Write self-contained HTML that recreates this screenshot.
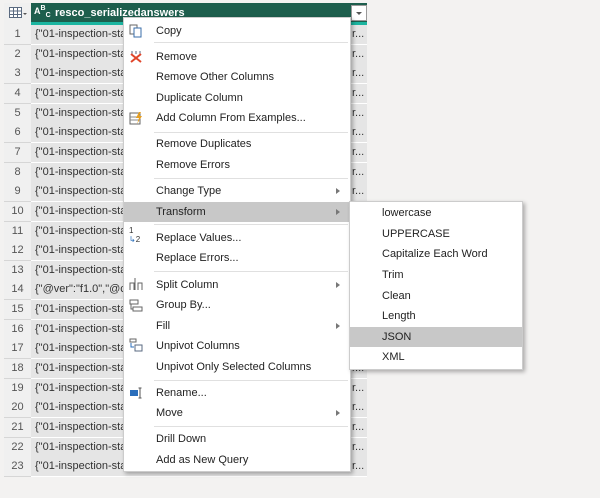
<!DOCTYPE html><html><head><style>
body{margin:0;width:600px;height:498px;background:#f3f2f1;font-family:"Liberation Sans",sans-serif;position:relative;overflow:hidden}
.a{position:absolute}
.hdr{left:31px;top:3px;width:336px;height:19px;background:#1d5e4d;color:#fff;font-weight:bold;font-size:11px}
.rn{left:4px;width:27px;height:19px;background:#f0f0f0;border-bottom:1px solid #d6d6d6;border-right:1px solid #d0d0d0;color:#555;font-size:11px;text-align:center;line-height:19px}
.dc{left:31px;width:336px;height:19px;background:#e5e5e5;border-bottom:1px solid #fff;font-size:11px;color:#333;line-height:19px;text-indent:4px;white-space:nowrap;overflow:hidden}
.menu{left:123px;top:17px;width:226px;height:453px;background:#fff;border:1px solid #ccc;box-shadow:2px 2px 4px rgba(0,0,0,.3);font-size:11px;color:#222}
.it{position:absolute;left:0;width:226px;height:20px;line-height:20px;text-indent:32px}
.sep{position:absolute;left:30px;width:194px;height:1px;background:#e0e0e0}
.hl{background:#c8c8c8}
.arr{position:absolute;right:10px;top:7px;width:0;height:0;border-left:4px solid #777;border-top:3px solid transparent;border-bottom:3px solid transparent}
.sub{left:349px;top:201px;width:172px;height:167px;background:#fff;border:1px solid #ccc;box-shadow:2px 2px 4px rgba(0,0,0,.3);font-size:11px;color:#222}
.si{position:absolute;left:0;width:172px;height:20px;line-height:20px;text-indent:32px}
</style></head><body>
<div class="a" style="left:4px;top:3px;width:27px;height:22px;background:#f0f0f0"></div>
<svg class="a" style="left:9px;top:7px" width="20" height="12"><rect x="0.5" y="0.5" width="12" height="10" fill="#fff" stroke="#5a6a80"/><path d="M0 4H13M0 7.5H13M4.5 1V11M8.5 1V11" stroke="#5a6a80"/><path d="M14 6l2 2 2-2z" fill="#555"/></svg>
<div class="a hdr"><span style="position:absolute;left:3px;top:2px;font-size:9px">A<sup style="font-size:7px">B</sup><sub style="font-size:7px">C</sub></span><span style="position:absolute;left:24px;top:4px">resco_serializedanswers</span>
<div style="position:absolute;left:320px;top:2px;width:14px;height:14px;background:#fff;border:1px solid #999"><div style="position:absolute;left:4px;top:6px;border-top:3px solid #555;border-left:3px solid transparent;border-right:3px solid transparent"></div></div></div>
<div class="a" style="left:31px;top:22px;width:336px;height:3px;background:#1bb5a0"></div>
<div id="rows"></div>
<script>
var h='';for(var i=0;i<23;i++){var t=25+i*19.65;var txt=i==13?'{"@ver":"f1.0","@c':'{"01-inspection-sta';h+='<div class="a rn" style="top:'+t+'px">'+(i+1)+'</div><div class="a dc" style="top:'+t+'px">'+txt+'<span style="position:absolute;left:317px">r...</span></div>';}
document.getElementById('rows').innerHTML=h;
</script>
<div class="a menu">
<svg style="position:absolute;left:5px;top:6px" width="14" height="14"><rect x="1" y="1" width="7" height="9" fill="#fff" stroke="#666"/><rect x="5" y="4" width="7" height="9" fill="#fff" stroke="#3a6ea8"/></svg>
<div class="it" style="top:3px">Copy</div>
<div class="sep" style="top:24px"></div>
<svg style="position:absolute;left:5px;top:31px" width="14" height="14"><path d="M3 2v3M7 2v3M11 2v3" stroke="#5a6a80"/><path d="M2 5l10 8M12 5L2 13" stroke="#e0452a" stroke-width="2"/></svg>
<div class="it" style="top:29px">Remove</div>
<div class="it" style="top:49px">Remove Other Columns</div>
<div class="it" style="top:70px">Duplicate Column</div>
<svg style="position:absolute;left:5px;top:93px" width="14" height="14"><rect x="1" y="2" width="10" height="11" fill="#fff" stroke="#666"/><path d="M1 6H11M1 9H11" stroke="#888"/><path d="M10 1l-3 6h3l-2 6 5-8h-3l2-4z" fill="#e8a020"/></svg>
<div class="it" style="top:90px">Add Column From Examples...</div>
<div class="sep" style="top:114px"></div>
<div class="it" style="top:116px">Remove Duplicates</div>
<div class="it" style="top:137px">Remove Errors</div>
<div class="sep" style="top:160px"></div>
<div class="it" style="top:163px">Change Type<div class="arr"></div></div>
<div class="it hl" style="top:184px">Transform<div class="arr"></div></div>
<div class="sep" style="top:206px"></div>
<div style="position:absolute;left:5px;top:208px;font-size:8px;color:#333">1<br><span style="color:#2a6ebb">↳</span>2</div>
<div class="it" style="top:210px">Replace Values...</div>
<div class="it" style="top:230px">Replace Errors...</div>
<div class="sep" style="top:253px"></div>
<svg style="position:absolute;left:5px;top:258px" width="14" height="16"><path d="M1 14V7H5V14M6 14V2M9 14V7H13V14" stroke="#666" fill="none"/></svg>
<div class="it" style="top:257px">Split Column<div class="arr"></div></div>
<svg style="position:absolute;left:5px;top:281px" width="14" height="14"><rect x="1" y="1" width="8" height="4" fill="none" stroke="#666"/><rect x="4" y="8" width="9" height="4" fill="none" stroke="#666"/><path d="M2 5v5h2" stroke="#666" fill="none"/></svg>
<div class="it" style="top:277px">Group By...</div>
<div class="it" style="top:298px">Fill<div class="arr"></div></div>
<svg style="position:absolute;left:5px;top:320px" width="14" height="14"><rect x="1" y="1" width="6" height="3" fill="none" stroke="#666"/><rect x="6" y="7" width="7" height="6" fill="#fff" stroke="#5a6a80"/><path d="M2 5v4h3" stroke="#2a6ebb" fill="none"/></svg>
<div class="it" style="top:318px">Unpivot Columns</div>
<div class="it" style="top:339px">Unpivot Only Selected Columns</div>
<div class="sep" style="top:362px"></div>
<svg style="position:absolute;left:5px;top:369px" width="14" height="12"><rect x="1" y="3" width="8" height="6" fill="#2a6ebb"/><path d="M11 1v10M9.5 1h3M9.5 11h3" stroke="#555"/></svg>
<div class="it" style="top:365px">Rename...</div>
<div class="it" style="top:385px">Move<div class="arr"></div></div>
<div class="sep" style="top:408px"></div>
<div class="it" style="top:411px">Drill Down</div>
<div class="it" style="top:432px">Add as New Query</div>
</div>
<div class="a sub">
<div class="si" style="top:1px">lowercase</div>
<div class="si" style="top:22px">UPPERCASE</div>
<div class="si" style="top:42px">Capitalize Each Word</div>
<div class="si" style="top:63px">Trim</div>
<div class="si" style="top:84px">Clean</div>
<div class="si" style="top:104px">Length</div>
<div class="si hl" style="top:125px">JSON</div>
<div class="si" style="top:145px">XML</div>
</div>
</body></html>
